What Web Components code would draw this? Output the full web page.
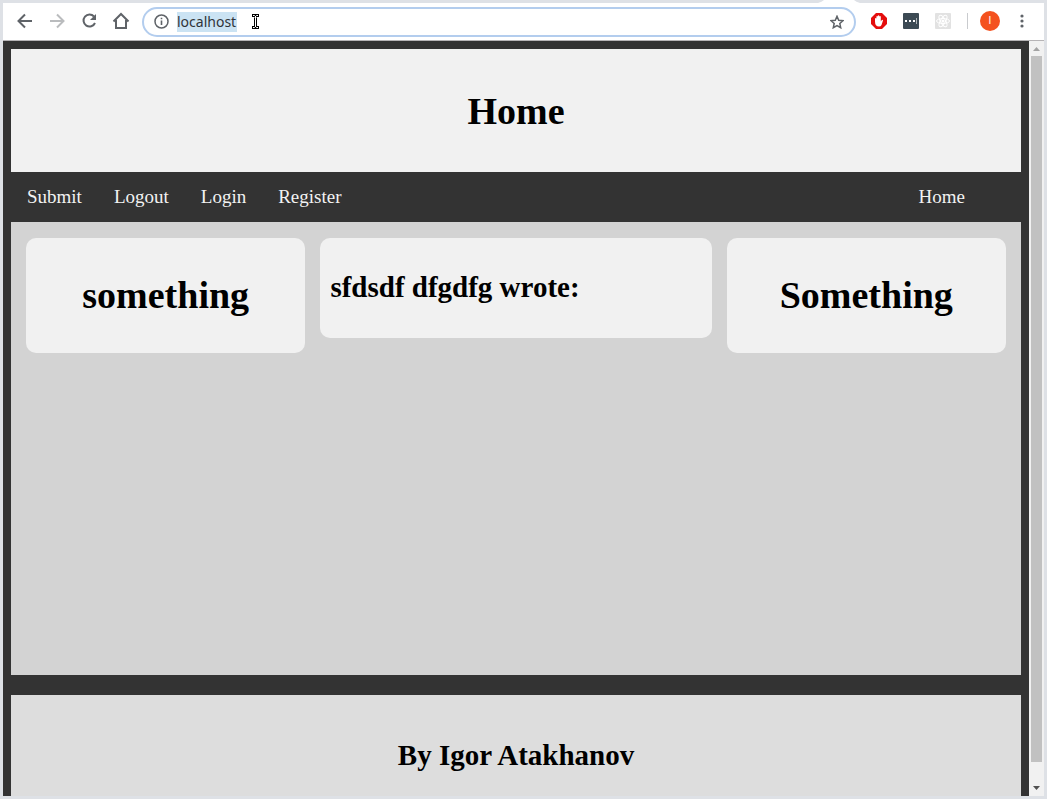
<!DOCTYPE html>
<html lang="en">
<head>
<meta charset="utf-8">
<title>Home</title>
<style>
html, body { margin: 0; height: 100%; }
body { font-family: "Liberation Serif", serif; overflow: hidden; }
</style>
</head>
<body>
<browser-window>
  <browser-toolbar slot="toolbar"></browser-toolbar>
  <site-header>Home</site-header>
  <site-nav></site-nav>
  <site-main>
    <site-card><h1>something</h1></site-card>
    <site-card class="post"><h2>sfdsdf dfgdfg wrote:</h2></site-card>
    <site-card><h1>Something</h1></site-card>
  </site-main>
  <site-footer>By Igor Atakhanov</site-footer>
  <scroll-bar slot="scrollbar"></scroll-bar>
</browser-window>
<script>
function define(name, html) {
  const template = document.createElement('template');
  template.innerHTML = html;
  customElements.define(name, class extends HTMLElement {
    constructor() {
      super();
      this.attachShadow({ mode: 'open' }).append(template.content.cloneNode(true));
    }
  });
}

define('browser-window', `
<style>
:host { display: flex; flex-direction: column; position: relative; height: 100vh; box-sizing: border-box; padding: 3px; background: #dee1e6; }
.tab { position: absolute; top: 0; right: 187px; width: 42px; height: 3px; }
.view { flex: 1; min-height: 0; display: flex; border-top: 1px solid #b6b4b6; }
.page { flex: 1; min-width: 0; overflow: hidden; box-sizing: border-box; padding: 8px; padding-bottom: 0; background: #333; }
</style>
<svg class="tab" viewBox="0 0 42 3"><path d="M0 3Q4 2 6 0H36Q38 2 42 3Z" fill="#fff"/></svg>
<slot name="toolbar"></slot>
<div class="view"><div class="page"><slot></slot></div><slot name="scrollbar"></slot></div>`);

define('browser-toolbar', `
<style>
:host { display: flex; align-items: center; height: 37px; box-sizing: border-box; padding: 0 6px 2px; background: #fff; font-family: "Noto Sans", sans-serif; }
button { display: flex; align-items: center; justify-content: center; flex: none; width: 24px; height: 24px; margin: 0 4px; padding: 0; border: 0; background: none; }
svg { display: block; flex: none; }
.omnibox { position: relative; flex: 1; min-width: 0; display: flex; align-items: center; gap: 8px; height: 30px; box-sizing: border-box; margin: 2px 7px 0 5px; padding: 0 5px 0 10px; border: 2px solid #b3cdee; border-radius: 15px; background: #fff; }
.field { flex: 1; min-width: 0; display: flex; }
input { width: 60px; height: 20px; padding: 0; border: 0; outline: 0; background: #cbe3f3; color: #303438; font: 14px "Noto Sans", sans-serif; }
.omnibox button { margin: 0; }
.cursor { position: absolute; left: 107px; top: 4px; }
.divider { width: 1px; height: 16px; margin: 0 8px; background: #c9cbce; }
.avatar { width: 20px; height: 20px; margin: 0 6px 0 4px; border-radius: 50%; background: #f4511e; color: #fff; font: 10px "Liberation Sans", sans-serif; }
</style>
<button aria-label="Back"><svg width="16" height="16" viewBox="0 0 16 16" fill="none" stroke="#5f6368" stroke-width="2"><path d="M15 8H2.500M8 1.500L1.500 8L8 14.500"/></svg></button>
<button aria-label="Forward"><svg width="16" height="16" viewBox="0 0 16 16" fill="none" stroke="#babcbe" stroke-width="2"><path d="M1 8h12.500M8 1.500L14.500 8L8 14.500"/></svg></button>
<button aria-label="Reload"><svg width="16" height="16" viewBox="0 0 16 16"><path d="M13 3.500A6 6 0 1 0 14 10" fill="none" stroke="#5f6368" stroke-width="2"/><path d="M15 1v6H9z" fill="#5f6368"/></svg></button>
<button aria-label="Home page"><svg width="18" height="18" viewBox="0 0 18 18" fill="none" stroke="#5f6368" stroke-width="2"><path d="M1.500 9.500L9 2l7.500 7.500M4 8v8h10V8"/></svg></button>
<div class="omnibox">
  <svg width="15" height="15" viewBox="0 0 15 15"><circle cx="7.500" cy="7.500" r="6.500" fill="none" stroke="#5f6368" stroke-width="1.500"/><path d="M6.700 6.500h1.600V11H6.700zM6.700 3.700h1.600v1.600H6.700z" fill="#5f6368"/></svg>
  <div class="field"><input type="text" value="localhost" aria-label="Address"></div>
  <button aria-label="Bookmark"><svg width="14" height="14" viewBox="0 0 14 14"><path d="M7 1.300l1.700 4 4.300.4-3.200 2.800.9 4.200L7 10.500l-3.700 2.200.9-4.200L1 5.700l4.300-.4z" fill="none" stroke="#5f6368" stroke-width="1.500"/></svg></button>
  <svg class="cursor" width="9" height="17" viewBox="0 0 9 17" fill="none"><path d="M1 2.500h2.500l1 1 1-1H8M4.500 3v11M1 14.500h2.500l1-1 1 1H8" stroke="#000" stroke-width="3"/><path d="M2 2.500h1.500l1 1 1-1H7M4.500 3v11M2 14.500h1.500l1-1 1 1H7" stroke="#fff"/></svg>
</div>
<button aria-label="AdBlock"><svg width="16" height="16" viewBox="0 0 16 16"><path d="M5 0h6l5 5v6l-5 5H5l-5-5V5z" fill="#e40d0d"/><path d="M4 8.500V5.400q.7-1 1.400 0V8V3.400q.7-1 1.400 0V7V2.700q.8-1 1.500 0V7V3.400q.8-1 1.500 0V8.500l1-1.500q1-.4 1.200.4L10.500 12q-.8 1.500-2.500 1.500-4 0-4-5z" fill="#fff"/></svg></button>
<button aria-label="Password manager"><svg width="16" height="16" viewBox="0 0 16 16"><rect width="16" height="16" rx="1" fill="#3c4a54"/><path d="M2 7h2v2H2zM6 7h2v2H6zM10 7h2v2h-2z" fill="#fff"/><path d="M13 5h1v6h-1z" fill="#aeb4b8"/></svg></button>
<button aria-label="React tools"><svg width="16" height="16" viewBox="0 0 16 16"><rect width="16" height="16" rx="1" fill="#e2e2e2"/><g fill="none" stroke="#fff"><ellipse cx="8" cy="8" rx="6.500" ry="2.500"/><ellipse cx="8" cy="8" rx="6.500" ry="2.500" transform="rotate(60 8 8)"/><ellipse cx="8" cy="8" rx="6.500" ry="2.500" transform="rotate(120 8 8)"/></g><circle cx="8" cy="8" r="1.500" fill="#fff"/></svg></button>
<span class="divider"></span>
<button class="avatar" aria-label="Profile">I</button>
<button aria-label="Menu"><svg width="4" height="14" viewBox="0 0 4 14" fill="#5f6368"><circle cx="2" cy="2" r="1.600"/><circle cx="2" cy="7" r="1.600"/><circle cx="2" cy="12" r="1.600"/></svg></button>`);

define('site-header', `
<style>
:host { display: block; padding: 41px 20px 39px; background: #f1f1f1; text-align: center; color: #000; }
h1 { margin: 0; font-size: 38px; line-height: 43px; }
</style>
<h1><slot></slot></h1>`);

define('site-nav', `
<style>
:host { display: block; background: #333; }
nav { display: flex; }
a { padding: 14px 16px; color: #f2f2f2; font-size: 19px; line-height: 22px; text-decoration: none; }
a.home { margin-left: auto; margin-right: 40px; }
</style>
<nav><a href="#submit">Submit</a><a href="#logout">Logout</a><a href="#login">Login</a><a href="#register">Register</a><a class="home" href="#home">Home</a></nav>`);

define('site-main', `
<style>
:host { display: grid; grid-template-columns: 5fr 7fr 5fr; align-items: start; gap: 15px; min-height: 453px; box-sizing: border-box; padding: 16px 15px; background: #d3d3d3; }
</style>
<slot></slot>`);

define('site-card', `
<style>
:host { display: block; padding: 36px 10px; border-radius: 10px; background: #f1f1f1; text-align: center; color: #000; }
:host(.post) { padding: 32px 10px 34px; text-align: left; }
::slotted(h1) { margin: 0; font-size: 38px; line-height: 43px; }
::slotted(h2) { margin: 0; font-size: 29px; line-height: 34px; }
</style>
<slot></slot>`);

define('site-footer', `
<style>
:host { display: block; margin-top: 20px; padding: 43px 20px; background: #ddd; text-align: center; color: #000; }
h2 { margin: 0; font-size: 29px; line-height: 34px; }
</style>
<h2><slot></slot></h2>`);

define('scroll-bar', `
<style>
:host { display: flex; flex-direction: column; align-items: center; flex: none; width: 15px; background: #f1f1f1; }
svg { display: block; flex: none; }
.track { flex: 1; width: 11px; }
.thumb { height: calc(100% - 19px); background: #c1c1c1; }
</style>
<svg width="15" height="15" viewBox="0 0 15 15"><path d="M4 10l3.500-4L11 10z" fill="#a3a3a3"/></svg>
<div class="track"><div class="thumb"></div></div>
<svg width="15" height="15" viewBox="0 0 15 15"><path d="M4 5h7L7.500 9z" fill="#505050"/></svg>`);
</script>
</body>
</html>
